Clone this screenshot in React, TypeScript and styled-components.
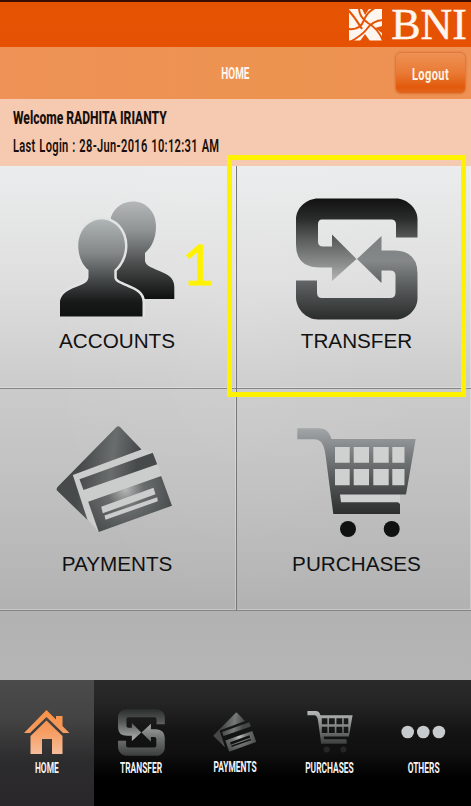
import React from "react";
import styled, { createGlobalStyle } from "styled-components";

const GlobalStyle = createGlobalStyle`
  * { box-sizing: border-box; }
  body { margin: 0; background: #000; }
`;

const Screen = styled.div`
  position: relative;
  width: 471px;
  height: 806px;
  display: flex;
  flex-direction: column;
  overflow: hidden;
  font-family: Roboto, "Liberation Sans", sans-serif;
`;

const BrandBar = styled.header`
  height: 47px;
  border-top: 2px solid #3a0d02;
  background: linear-gradient(#e45403, #e65102);
  display: flex;
  justify-content: flex-end;
  align-items: flex-start;
  gap: 8px;
  padding: 7px 4px 0 0;
`;

const BrandName = styled.span`
  font: 44px/44px "Liberation Serif", serif;
  color: #fff6ef;
  -webkit-text-stroke: 0.5px #fff6ef;
  margin-top: -6px;
`;

const TitleBar = styled.div`
  height: 52px;
  background: linear-gradient(90deg, #ee9257, #ed9350 60%, #ee9255);
  display: grid;
  grid-template-columns: 1fr 70px 1fr;
  align-items: center;
`;

const Narrow = styled.span<{ $size: number; $scale: number; $weight?: number; $left?: boolean; $track?: number; $space?: number }>`
  display: inline-block;
  white-space: nowrap;
  font-size: ${(p) => p.$size}px;
  line-height: 20px;
  font-weight: ${(p) => p.$weight ?? 700};
  letter-spacing: ${(p) => p.$track ?? 0}px;
  word-spacing: ${(p) => p.$space ?? 0}px;
  transform: scaleX(${(p) => p.$scale});
  transform-origin: ${(p) => (p.$left ? "left" : "center")};
`;

const PageTitle = styled.div`
  grid-column: 2;
  text-align: center;
  color: #fff7ee;
  padding-top: 2px;
`;

const LogoutButton = styled.button`
  justify-self: end;
  margin-right: 5px;
  width: 71px;
  height: 42px;
  padding: 2px 0 0;
  border: 1px solid #e07a3b;
  border-radius: 6px;
  background: linear-gradient(#ee9155, #e97a35 50%, #e25a0c 85%, #e2651d);
  box-shadow: 0 0 2px rgba(190, 90, 30, 0.5);
  color: #fff3e4;
  font-family: inherit;
  display: flex;
  align-items: center;
  justify-content: center;
`;

const Welcome = styled.section`
  height: 67px;
  background: #f6c9b1;
  color: #170f0b;
  padding: 9px 13px 0;
  display: flex;
  flex-direction: column;
  align-items: flex-start;
  gap: 8px;
`;

const Main = styled.main`
  height: 514px;
  background:
    radial-gradient(ellipse at 50% 30%, rgba(255, 255, 255, 0.08), transparent 60%),
    linear-gradient(#ebeced 0, #dfdfdf 22%, #cbcbcb 43%, #bfbfbf 65%, #b2b2b2 86%, #b5b5b5 100%);
`;

const Tiles = styled.div`
  display: grid;
  grid-template-columns: 237px 234px;
  grid-template-rows: 223px 222px;
`;

const Tile = styled.div<{ $divided?: boolean }>`
  display: flex;
  flex-direction: column;
  align-items: center;
  padding-top: 32px;
  padding-right: ${(p) => (p.$divided ? 2 : 0)}px;
  padding-left: ${(p) => (p.$divided ? 0 : 5)}px;
  border-bottom: 1px solid #858585;
  border-right: ${(p) => (p.$divided ? "1px solid #777" : "none")};
  box-shadow: inset -1px -1px 0 rgba(255, 255, 255, 0.28);
`;

const IconSlot = styled.div<{ $drop?: number; $nudge?: number }>`
  height: 131px;
  padding-top: ${(p) => p.$drop ?? 0}px;
  margin-right: ${(p) => p.$nudge ?? 0}px;
`;

const TileLabel = styled.div`
  font: 20.7px/24px "Liberation Sans", Arial, sans-serif;
  color: #111;
`;

const NavBar = styled.nav`
  height: 126px;
  display: grid;
  grid-template-columns: repeat(5, 1fr);
  background: linear-gradient(#2a2a2a, #252525 18%, #131313 42%, #101010 58%, #000 78%);
`;

const NavItem = styled.div<{ $active?: boolean; $lift?: number }>`
  display: flex;
  flex-direction: column;
  align-items: center;
  padding-top: 27px;
  color: #f4f4f4;
  background: ${(p) => (p.$active ? "linear-gradient(#4b4b4b, #444 30%, #2c2b2d 65%, #29272a)" : "none")};
  & > span { margin-top: ${(p) => 1 - (p.$lift ?? 0)}px; }
`;

const NavIcon = styled.div`
  height: 50px;
  display: flex;
  align-items: center;
`;

const Highlight = styled.div`
  position: absolute;
  left: 227px;
  top: 155px;
  width: 239px;
  height: 242px;
  border: 5px solid #fff200;
`;

const StepNumber = styled.div`
  position: absolute;
  left: 182px;
  top: 234px;
  font: 56px/60px Lato, sans-serif;
  color: #fff200;
  -webkit-text-stroke: 0.8px #fff200;
`;

type Stop = [number, string];

const Gradient = ({ id, from, to, stops }: { id: string; from: number; to: number; stops: Stop[] }) => (
  <linearGradient id={id} gradientUnits="userSpaceOnUse" x1="0" x2="0" y1={from} y2={to}>
    {stops.map(([o, c]) => (
      <stop key={o} offset={o} stopColor={c} />
    ))}
  </linearGradient>
);

const BrandMark = () => (
  <svg width="34" height="32" viewBox="0 0 34 32">
    <rect width="33" height="31.5" fill="#fff6ef" />
    <g fill="none" stroke="#e55304" strokeWidth="2">
      <path d="M-1 20C8 21 13 17 15 11C17 6 20 2 26 -1" />
      <path d="M1 33C8 29 13 26 17 21C22 14 27 11 35 11" />
      <path d="M10 -1C10 6 13 10 19 14C26 18 31 24 34 32" />
      <path d="M-1 1C6 8 9 14 13 20" />
    </g>
    <path fill="#e55304" d="M13 0H20L16 6ZM11 32L16 25L21 32ZM33 17V24L26 19Z" />
  </svg>
);

const AccountsIcon = () => (
  <svg width="116.500" height="116.500" viewBox="61 200 116.500 116.500">
    <defs>
      <Gradient id="accBack" from={201} to={299} stops={[[0, "#b4b8b9"], [0.3, "#8f9394"], [0.65, "#4a4c4c"], [1, "#0e1010"]]} />
      <Gradient id="accFront" from={219} to={317} stops={[[0, "#b0b5b6"], [0.35, "#838788"], [0.65, "#3f4242"], [0.85, "#161918"], [1, "#101212"]]} />
    </defs>
    <path fill="url(#accBack)" d="M112 217C116 206 125 201.5 134 201.5C147 201.5 157 212 157 226C157 238 153 247 146 253V261C147 266 152 267 158 270C168 274 175.300 277 175.300 287V299H110V240Z" />
    <path
      fill="url(#accFront)"
      stroke="#e2e3e3"
      strokeWidth="5"
      paintOrder="stroke"
      d="M61 316.500V303C61 291 76 288 84 284C88 282 89.500 280 89.500 276V270C82 264 79.300 254 79.300 246C79.300 230 90 219.500 102.500 219.500C115 219.500 126 230 126 246C126 256 121 265 115.300 270V278C116 281 118 282.500 122 284C132 289 143.500 291 143.500 302V316.500Z"
    />
  </svg>
);

const TransferIcon = ({ size, id, upper, lower }: { size: number; id: string; upper: Stop[]; lower: Stop[] }) => (
  <svg width={size} height={size} viewBox="296 198.500 122 122">
    <defs>
      <Gradient id={`${id}U`} from={199} to={282} stops={upper} />
      <Gradient id={`${id}L`} from={236} to={320} stops={lower} />
    </defs>
    <path fill={`url(#${id}U)`} d="M417.500 238H396V225Q396 220 391 220H322Q318 220 318 225V242Q318 247 323 247H332V235L356.500 259.500L332 281.500V268H320Q296 268 296 245V220C296 208 307 199 318 199H396C407 199 417.500 209 417.500 219Z" />
    <path fill={`url(#${id}L)`} d="M296 281H317V293Q317 298.500 322 298.500H390Q395.500 298.500 395.500 293V276Q395.500 271 390 271H381.500V283.500L357 259.500L381.500 236.500V251H395Q417.500 252 417.500 274V299C417.500 310 407 320 396 320H318C306 320 296 309 296 298Z" />
  </svg>
);

const PaymentsIcon = ({ width, height, id, tones, backing }: { width: number; height: number; id: string; tones: [string, string, string]; backing?: string }) => (
  <svg width={width} height={height} viewBox="56.500 425 117 108">
    <defs>
      <radialGradient id={id} gradientUnits="userSpaceOnUse" cx="126" cy="490" r="52" gradientTransform="rotate(-20 126 490)">
        <stop offset="0" stopColor={tones[0]} />
        <stop offset="0.35" stopColor={tones[1]} />
        <stop offset="1" stopColor={tones[2]} />
      </radialGradient>
      <linearGradient id={`${id}B`} gradientUnits="userSpaceOnUse" x1="82" y1="455" x2="138" y2="462">
        <stop offset="0" stopColor={tones[2]} />
        <stop offset="0.55" stopColor={tones[1]} />
        <stop offset="1" stopColor={tones[2]} />
      </linearGradient>
    </defs>
    {backing && <path fill={backing} d="M73.500 475L142 449L154 452L172 505L99 532L88 519Z" />}
    <path fill={`url(#${id}B)`} d="M117 427Q118.500 425.500 120.500 427L142 449.500L73.300 475L88 520L57.500 490.500Q56.500 489 58 487Z" />
    <path fill={`url(#${id}B)`} d="M80 479.300L153.300 452.700L157.700 464.300L84 490Z" />
    <path fill={`url(#${id})`} fillRule="evenodd" d="M88.700 501.700L161.700 476L172.500 505.700L99.300 532ZM101.700 506.700L103.300 513.300L156 494.300L154 487.700ZM105 515.500L106 519.700L158.300 501.300L157.700 497.300Z" />
  </svg>
);

const CartIcon = ({ width, height, id, stops, wheel, backing }: { width: number; height: number; id: string; stops: Stop[]; wheel: string; backing?: string }) => (
  <svg width={width} height={height} viewBox="297 428 119 110">
    <defs>
      <Gradient id={id} from={428} to={514} stops={stops} />
    </defs>
    {backing && <path fill={backing} d="M333 445H406V488H333ZM339 494H400V503H339Z" />}
    <path
      fill={`url(#${id})`}
      fillRule="evenodd"
      d="M297.300 428.300H319C326 428.300 329 432 331.500 439H415.700L406 494.500H340L341 502.300H398L400 504V514H333.300L325.500 455C324 444 321 439.300 314 439.300H297.300Z
      M335 447V462.700H349.700V447ZM353.700 447V462.700H369V447ZM373.300 447V462.700H388.700V447ZM392.300 447V462.700H404.500V447Z
      M335 469V485.300H349.700V469ZM353.700 469V485.300H369V469ZM373.300 469V485.300H388.700V469ZM392.300 469V485.300H404.500V469Z"
    />
    <circle cx="348" cy="529" r="8" fill={wheel} />
    <circle cx="391.700" cy="529" r="8" fill={wheel} />
  </svg>
);

const HomeIcon = () => (
  <svg width="46" height="45" viewBox="0 0 46 45">
    <defs>
      <Gradient id="house" from={0} to={44} stops={[[0, "#fb9246"], [0.45, "#f69a5d"], [1, "#f7bd9b"]]} />
    </defs>
    <g fill="url(#house)">
      <path d="M0 23L22.500 0L32 9.500V6H38.500V16L45.500 23H39L22.500 7L6 23Z" />
      <path d="M22.500 10.500L38.500 26V44H28V29H18V44H6.500V26Z" />
    </g>
  </svg>
);

const DotsIcon = () => (
  <svg width="45" height="14" viewBox="0 0 45 14">
    {[6.7, 22.3, 37.9].map((x) => (
      <circle key={x} cx={x} cy="7" r="6.300" fill="#c8cbce" />
    ))}
  </svg>
);

export default function App() {
  return (
    <>
      <GlobalStyle />
      <Screen>
        <BrandBar>
          <BrandMark />
          <BrandName>BNI</BrandName>
        </BrandBar>
        <TitleBar>
          <PageTitle>
            <Narrow $size={16.5} $scale={0.6}>HOME</Narrow>
          </PageTitle>
          <LogoutButton>
            <Narrow $size={17} $scale={0.65} $track={0.6}>Logout</Narrow>
          </LogoutButton>
        </TitleBar>
        <Welcome>
          <Narrow $size={17.5} $scale={0.69} $left $weight={800}>Welcome RADHITA IRIANTY</Narrow>
          <Narrow $size={17.5} $scale={0.634} $weight={600} $left $track={0.5} $space={1}>Last Login : 28-Jun-2016 10:12:31 AM</Narrow>
        </Welcome>
        <Main>
          <Tiles>
            <Tile $divided>
              <IconSlot $drop={2} $nudge={-3}><AccountsIcon /></IconSlot>
              <TileLabel>ACCOUNTS</TileLabel>
            </Tile>
            <Tile>
              <IconSlot>
                <TransferIcon
                  size={122}
                  id="tileTransfer"
                  upper={[[0, "#111"], [0.25, "#2b2c2c"], [0.5, "#5c5e5e"], [0.8, "#8e9090"], [1, "#b5b7b7"]]}
                  lower={[[0, "#7d8080"], [0.3, "#858888"], [0.6, "#5a5d5d"], [1, "#2b2d2d"]]}
                />
              </IconSlot>
              <TileLabel>TRANSFER</TileLabel>
            </Tile>
            <Tile $divided>
              <IconSlot $drop={4} $nudge={5}>
                <PaymentsIcon width={117} height={108} id="tilePay" tones={["#b4b6b6", "#6a6d6d", "#474a4a"]} backing="#cbcdcc" />
              </IconSlot>
              <TileLabel>PAYMENTS</TileLabel>
            </Tile>
            <Tile>
              <IconSlot $drop={7}>
                <CartIcon
                  width={119}
                  height={110}
                  id="tileCart"
                  stops={[[0, "#a2a6a8"], [0.3, "#7a7e80"], [0.6, "#555858"], [1, "#2c2f2e"]]}
                  wheel="#101212"
                  backing="#cfd0d0"
                />
              </IconSlot>
              <TileLabel>PURCHASES</TileLabel>
            </Tile>
          </Tiles>
        </Main>
        <NavBar>
          <NavItem $active>
            <NavIcon><HomeIcon /></NavIcon>
            <Narrow $size={14} $scale={0.6}>HOME</Narrow>
          </NavItem>
          <NavItem>
            <NavIcon>
              <TransferIcon
                size={47}
                id="navTransfer"
                upper={[[0, "#2c2e2e"], [0.4, "#565858"], [1, "#b4b6b6"]]}
                lower={[[0, "#a4a6a6"], [0.5, "#6c6e6e"], [1, "#3c3e3e"]]}
              />
            </NavIcon>
            <Narrow $size={14} $scale={0.6}>TRANSFER</Narrow>
          </NavItem>
          <NavItem $lift={1}>
            <NavIcon>
              <PaymentsIcon width={44} height={40} id="navPay" tones={["#c0c2c2", "#777979", "#454747"]} />
            </NavIcon>
            <Narrow $size={14} $scale={0.6}>PAYMENTS</Narrow>
          </NavItem>
          <NavItem>
            <NavIcon>
              <CartIcon width={46} height={42} id="navCart" stops={[[0, "#b8baba"], [0.5, "#808282"], [1, "#3c3e3e"]]} wheel="#252727" />
            </NavIcon>
            <Narrow $size={14} $scale={0.6}>PURCHASES</Narrow>
          </NavItem>
          <NavItem>
            <NavIcon><DotsIcon /></NavIcon>
            <Narrow $size={14} $scale={0.6}>OTHERS</Narrow>
          </NavItem>
        </NavBar>
        <StepNumber>1</StepNumber>
        <Highlight />
      </Screen>
    </>
  );
}
